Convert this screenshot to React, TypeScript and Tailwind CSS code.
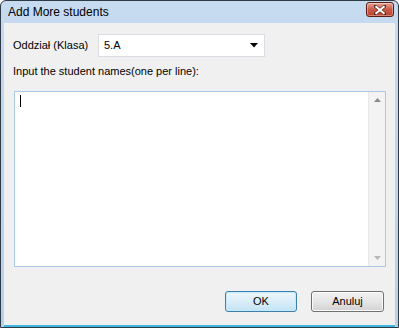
import React from "react";

const font = { fontFamily: '"Liberation Sans", Arial, sans-serif' };

function CloseButton() {
  return (
    <div className="w-[28px] h-[15px] rounded-[3px] border border-[#5a1e16] bg-gradient-to-b from-[#e4a597] via-[#c75a47] to-[#c0432c] flex items-center justify-center shadow-[inset_0_0_0_1px_rgba(255,255,255,0.35)]">
      <svg width="12" height="10" viewBox="0 0 12 10">
        <path d="M1 1 L11 9 M11 1 L1 9" stroke="#5a2a22" strokeWidth="3.2" strokeLinecap="square" />
        <path d="M1.5 1.3 L10.5 8.7 M10.5 1.3 L1.5 8.7" stroke="#ffffff" strokeWidth="2" />
      </svg>
    </div>
  );
}

function Button({ label, primary }: { label: string; primary?: boolean }) {
  return (
    <button
      className={
        primary
          ? "w-[72px] h-[21px] rounded-[3px] border border-[#3c7fb1] bg-gradient-to-b from-[#ecf6fc] via-[#daeef9] to-[#c2e3f6] text-[11px] text-black shadow-[inset_0_0_0_1px_#c6e8fb]"
          : "w-[73px] h-[21px] rounded-[3px] border border-[#707070] bg-gradient-to-b from-[#f2f2f2] via-[#e6e6e6] to-[#d2d2d2] text-[11px] text-black shadow-[inset_0_0_0_1px_#fbfbfb]"
      }
      style={font}
    >
      {label}
    </button>
  );
}

export default function App() {
  return (
    <div className="w-[399px] h-[328px] bg-white" style={font}>
      <div className="w-full h-full flex flex-col rounded-t-[6px] border border-[#2e3a46] bg-gradient-to-b from-[#c6daf0] to-[#b8d0ea] overflow-hidden">
        {/* title bar */}
        <div className="h-[22px] flex items-center justify-between pl-[7px] pr-[4px] shrink-0">
          <span className="text-[12px] text-black leading-none">Add More students</span>
          <div className="-mt-[5px]">
            <CloseButton />
          </div>
        </div>
        {/* client */}
        <div className="flex-1 flex px-[3px] pb-[2px]">
          <div className="flex-1 flex flex-col bg-[#f0f0f0] border-b-[2px] border-[#3cb6dc] -mb-[2px]">
            <div className="flex items-center pt-[11px] pl-[9px]">
              <span className="text-[11px] text-black w-[85px]">Oddział (Klasa)</span>
              <div className="w-[167px] h-[23px] bg-white border border-[#d9dde3] flex items-center justify-between pl-[5px] pr-[6px]">
                <span className="text-[11px] text-black">5.A</span>
                <svg width="8" height="5" viewBox="0 0 8 5">
                  <path d="M0 0 H8 L4 4.5 Z" fill="#000" />
                </svg>
              </div>
            </div>
            <div className="pl-[9px] mt-[7px] text-[11px] text-black leading-[14px]">
              Input the student names(one per line):
            </div>
            <div className="ml-[10px] mt-[13px] w-[372px] h-[176px] bg-white border border-[#abc8e6] flex">
              <div className="flex-1 pt-[3px] pl-[5px]">
                <div className="w-px h-[12px] bg-black" />
              </div>
              <div className="w-[17px] h-full bg-[#f3f3f3] border-l border-[#e8e8e8] flex flex-col justify-between items-center py-[6px]">
                <svg width="7" height="4" viewBox="0 0 7 4">
                  <path d="M0 4 H7 L3.5 0 Z" fill="#8a8a8a" />
                </svg>
                <svg width="7" height="4" viewBox="0 0 7 4">
                  <path d="M0 0 H7 L3.5 4 Z" fill="#b8b8b8" />
                </svg>
              </div>
            </div>
            <div className="flex justify-end gap-[14px] mt-[24px] pr-[11px]">
              <Button label="OK" primary />
              <Button label="Anuluj" />
            </div>
          </div>
        </div>
      </div>
    </div>
  );
}
